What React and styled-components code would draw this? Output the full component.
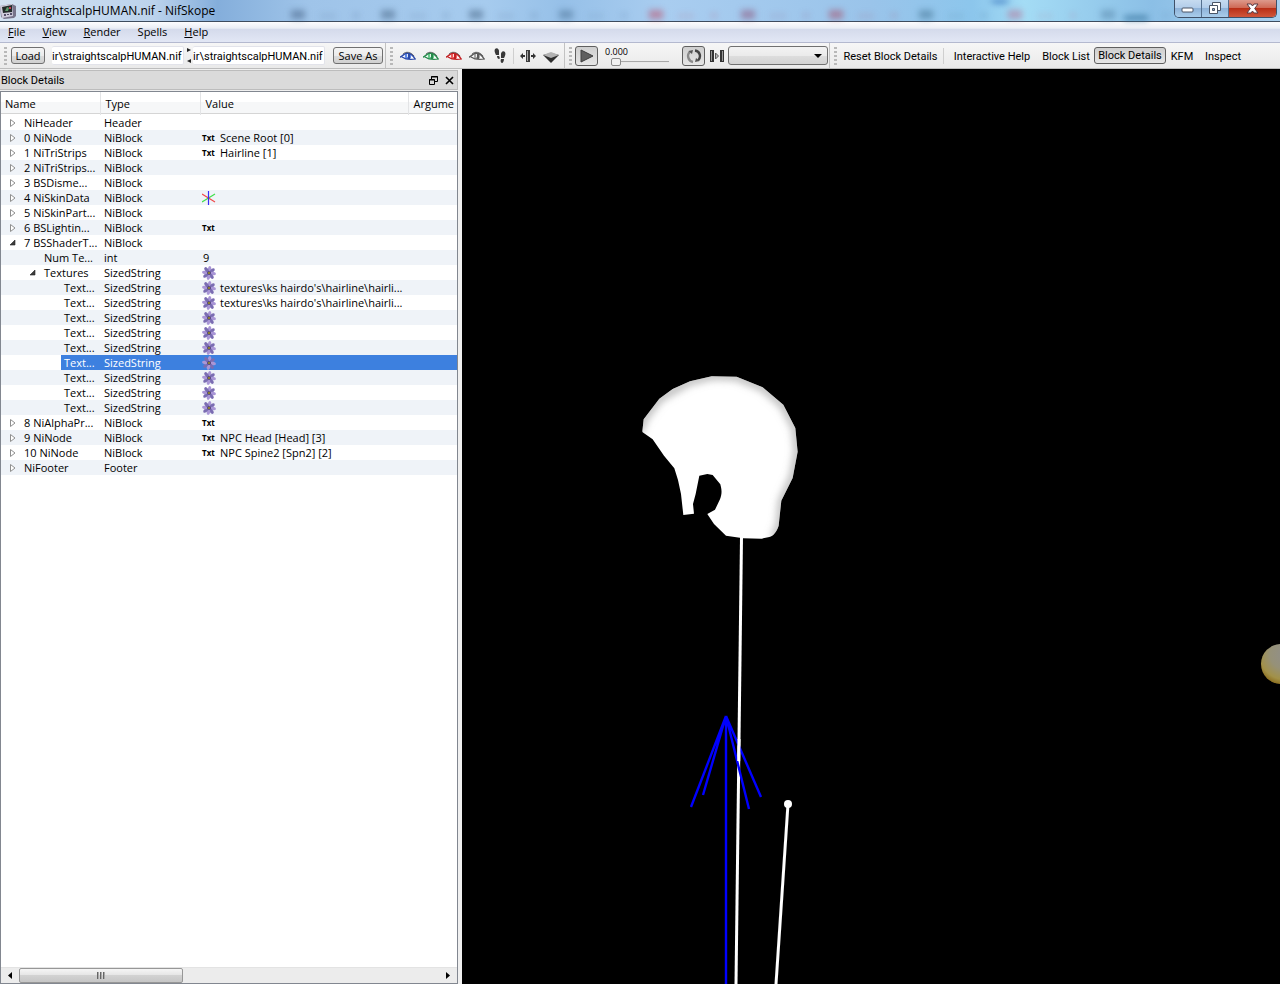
import React, { useState } from "react"
import styled, { createGlobalStyle, css } from "styled-components"

const rows = [
  { name: "NiHeader", type: "Header", open: false },
  { name: "0 NiNode", type: "NiBlock", open: false, icon: "txt", value: "Scene Root [0]" },
  { name: "1 NiTriStrips", type: "NiBlock", open: false, icon: "txt", value: "Hairline [1]" },
  { name: "2 NiTriStrips...", type: "NiBlock", open: false },
  { name: "3 BSDisme...", type: "NiBlock", open: false },
  { name: "4 NiSkinData", type: "NiBlock", open: false, icon: "axes" },
  { name: "5 NiSkinPart...", type: "NiBlock", open: false },
  { name: "6 BSLightin...", type: "NiBlock", open: false, icon: "txt" },
  { name: "7 BSShaderT...", type: "NiBlock", open: true },
  { name: "Num Te...", type: "int", level: 1, value: "9" },
  { name: "Textures", type: "SizedString", level: 1, open: true, icon: "flower" },
  { name: "Text...", type: "SizedString", level: 2, icon: "flower", value: "textures\\ks hairdo's\\hairline\\hairli..." },
  { name: "Text...", type: "SizedString", level: 2, icon: "flower", value: "textures\\ks hairdo's\\hairline\\hairli..." },
  { name: "Text...", type: "SizedString", level: 2, icon: "flower" },
  { name: "Text...", type: "SizedString", level: 2, icon: "flower" },
  { name: "Text...", type: "SizedString", level: 2, icon: "flower" },
  { name: "Text...", type: "SizedString", level: 2, icon: "flower", selected: true },
  { name: "Text...", type: "SizedString", level: 2, icon: "flower" },
  { name: "Text...", type: "SizedString", level: 2, icon: "flower" },
  { name: "Text...", type: "SizedString", level: 2, icon: "flower" },
  { name: "8 NiAlphaPr...", type: "NiBlock", open: false, icon: "txt" },
  { name: "9 NiNode", type: "NiBlock", open: false, icon: "txt", value: "NPC Head [Head] [3]" },
  { name: "10 NiNode", type: "NiBlock", open: false, icon: "txt", value: "NPC Spine2 [Spn2] [2]" },
  { name: "NiFooter", type: "Footer", open: false },
]

const menus = ["File", "View", "Render", "Spells", "Help"]

const smudges = [
  [300, "#3f5c80"],
  [390, "#41607f"],
  [478, "#41607f"],
  [568, "#4a6f94"],
  [658, "#c0455f"],
  [750, "#8a4a72"],
  [838, "#a84660"],
  [928, "#3f6f90"],
  [1017, "#b86a90"],
  [1110, "#5683a8"],
]

const AppIcon = () => (
  <svg width="16" height="16" viewBox="0 0 16 16">
    <path d="M0 3l12-2 4 2v10l-2 2-10 1-3-2z" fill="#77748a" />
    <path d="M0 3l12-2 1 12-11 2z" fill="#cfccdc" />
    <path d="M2 4l10-2v7l-9 1z" fill="#222b2a" />
    <path d="M5 8l2-4 2 1-1 3z" fill="#5f9a6c" />
    <path d="M9 4h2v2H9z" fill="#c33b4e" />
    <path d="M4 11h2v2H4zM7 11h2v1H7zM10 10h2v2h-2z" fill="#55506a" />
  </svg>
)

const Eye = ({ color, light }) => (
  <svg width="16" height="14" viewBox="0 0 16 14">
    <path d="M1 8C4 3 12 1 15 10c-4 1-10 2-14-2z" fill="#fff" />
    <circle cx="8" cy="7" r="3.200" fill={light} />
    <path d="M8 4h2v6H8z" fill={color} />
    <path d="M7 5h1v3H7z" fill="#fff" opacity="0.8" />
    <path d="M0 8c2 0 3-3 7-4 4 0 6 2 8 6" fill="none" stroke={color} strokeWidth="1.400" />
    <path d="M2 8c4 3 8 3 14 2" fill="none" stroke={color} strokeWidth="1.200" />
    <path d="M3 5c3-3 8-2 11 2" fill="none" stroke="#555" strokeWidth="0.800" />
  </svg>
)

const Feet = () => (
  <svg width="12" height="16" viewBox="0 0 12 16" fill="#383838">
    <path d="M1 1c2-2 4 0 4 2v4H2C1 5 0 3 1 1z" />
    <path d="M3 8h2c1 1 1 3 0 3s-2-1-2-3z" />
    <path d="M11 4c-2-2-4 0-4 2v4h3c1-2 2-4 1-6z" />
    <path d="M7 11h3c0 2-1 4-2 4s-2-2-1-4z" />
  </svg>
)

const Symmetry = () => (
  <svg width="16" height="14" viewBox="0 0 16 14">
    <path d="M6 1h4v12H6z" fill="#3c3c3c" />
    <path d="M7 2h1v10H7z" fill="#a8a8a8" />
    <path d="M0 7l3-3v2h2v2H3v2zM16 7l-3-3v2h-2v2h2v2z" fill="#333" />
  </svg>
)

const Wedge = () => (
  <svg width="16" height="14" viewBox="0 0 16 14">
    <path d="M0 6l8 8 8-8-8-2z" fill="#2e2e2e" />
    <path d="M0 6l8-3 8 3-8 3z" fill="#b2b2b2" />
  </svg>
)

const Play = () => (
  <svg width="16" height="14" viewBox="0 0 16 14">
    <path d="M2 1l12 6-12 6z" fill="#5e5e5e" stroke="#3e3e3e" />
  </svg>
)

const Loop = () => (
  <svg width="16" height="16" viewBox="0 0 16 16" fill="none" strokeWidth="2.400">
    <path d="M9 2.500C14 3 15.500 9 12 12.500" stroke="#444" />
    <path d="M7 14C2 13 0.500 7 4 3.500" stroke="#8a8a8a" />
    <path d="M2.500 3L7 2 6 6zM13.500 13L9 14l1-4z" fill="#555" stroke="none" />
  </svg>
)

const Step = () => (
  <svg width="14" height="12" viewBox="0 0 14 12">
    <path d="M0 0h4v12H0zM10 0h4v12h-4z" fill="#333" />
    <path d="M1 1h1v10H1zM12 1h1v10h-1z" fill="#999" />
    <path d="M5.500 3l3 3-3 3z" fill="#bbb" stroke="#555" />
  </svg>
)

const Flower = () => (
  <svg width="14" height="14" viewBox="0 0 14 14">
    {[0, 45, 90, 135, 180, 225, 270, 315].map((a) => (
      <ellipse
        key={a}
        cx="7"
        cy="3"
        rx="1.7"
        ry="3"
        fill={a % 90 ? "#7a6cb2" : "#a996d6"}
        transform={`rotate(${a + 8} 7 7)`}
      />
    ))}
    <circle cx="7" cy="7" r="1.800" fill="#3c2c58" />
    <circle cx="7" cy="7" r="1" fill="#a59a2c" />
  </svg>
)

const Axes = () => (
  <svg width="14" height="14" viewBox="0 0 14 14" strokeWidth="1.200">
    <path d="M0 11L13 3" stroke="#3fe04a" />
    <path d="M0 3l13 8" stroke="#f04a4a" />
    <path d="M6.500 0v14" stroke="#3a2cf5" />
  </svg>
)

const Arrow = ({ open }) => (
  <svg width="8" height="8" viewBox="0 0 8 8">
    {open ? (
      <path d="M7 1v5H2z" fill="#3c3c3c" stroke="#222" strokeWidth="0.6" />
    ) : (
      <path d="M2.500 0.500v7L7 4z" fill="#fff" stroke="#8f8f8f" />
    )}
  </svg>
)

const CellIcon = ({ kind }) => {
  if (kind === "txt") return <TxtIcon>Txt</TxtIcon>
  if (kind === "axes") return <IconBox><Axes /></IconBox>
  if (kind === "flower") return <IconBox><Flower /></IconBox>
  return null
}

// long paths stay scrolled to the file name
const showEnd = (el) => {
  if (el) el.scrollLeft = el.scrollWidth
}

const headPath =
  "M67 214L71 178 118 116 158 87 210 64 275 49 350 50 428 82 490 134 526 204 533 275 518 354 484 422 476 497C470 515 460 528 448 531L425 536 370 535 318 527 282 492 262 462 285 449 300 418C307 400 305 388 301 373L278 345 262 342 238 347 227 402 219 432 222 461 190 465 183 402 174 360 163 325 132 287 98 238 68 217Z"

const Scene = () => (
  <SceneSvg viewBox="0 0 818 915" preserveAspectRatio="xMidYMid slice" role="img" aria-label="Model view">
    <defs>
      <filter id="soft" x="-10%" y="-10%" width="120%" height="120%">
        <feGaussianBlur stdDeviation="12" />
      </filter>
      <clipPath id="headClip">
        <path d={headPath} />
      </clipPath>
      <radialGradient id="ball" cx="60%" cy="25%" r="75%">
        <stop offset="0" stopColor="#918f8a" />
        <stop offset="0.5" stopColor="#969178" />
        <stop offset="0.85" stopColor="#a29148" />
        <stop offset="1" stopColor="#8f7426" />
      </radialGradient>
    </defs>
    <path d="M279.500 468L274 915" stroke="#fff" strokeWidth="3" />
    <path d="M326 735L314 915" stroke="#fff" strokeWidth="3" />
    <circle cx="326" cy="735" r="4" fill="#fff" />
    <path
      d="M264 647V915M264 647L229 738M264 647L241 726M264 647L287 740M264 647L299 728"
      stroke="#00f"
      strokeWidth="2.400"
      fill="none"
    />
    <path d="M277 670L276.700 692" stroke="#fff" strokeWidth="3" />
    <g transform="translate(158 291) scale(0.3333)">
      <path d={headPath} fill="#fff" />
      <g clipPath="url(#headClip)">
        <path
          d="M60 215L70 178 118 115 207 65 276 47 351 50 428 82 490 135 527 205 534 275 520 350 486 425 480 495 462 535"
          fill="none"
          stroke="#9a9a9a"
          strokeWidth="16"
          filter="url(#soft)"
        />
      </g>
    </g>
    <circle cx="819" cy="595" r="20" fill="url(#ball)" />
  </SceneSvg>
)

export default function App() {
  const [time, setTime] = useState(0)

  return (
    <Window>
      <GlobalStyle />
      <TitleBar>
        <Smudges aria-hidden="true">
          {smudges.map(([x, color]) => (
            <g key={x} fill={color}>
              <rect x={x - 9} y="10" width="14" height="9" opacity="0.5" />
              <rect x={x + 20} y="14" width="16" height="4" opacity="0.15" />
              <rect x={x + 53} y="13" width="6" height="5" opacity="0.2" />
            </g>
          ))}
          <ellipse cx="1000" cy="0" rx="10" ry="3" fill="#2461b4" />
          <rect x="1124" y="16" width="24" height="4" fill="#2d6c96" opacity="0.8" />
        </Smudges>
        <AppIcon />
        <Title>straightscalpHUMAN.nif - NifSkope</Title>
        <Caption>
          <CaptionButton aria-label="Minimize">
            <svg width="14" height="8" viewBox="0 0 14 8">
              <rect x="1" y="3" width="11" height="4" rx="1" fill="#fff" stroke="#4a5566" />
            </svg>
          </CaptionButton>
          <CaptionButton aria-label="Restore">
            <svg width="13" height="13" viewBox="0 0 13 13" fill="#fff" stroke="#4a5566">
              <path d="M3.500 0.500h8v8h-8z" />
              <path d="M0.500 3.500h8v8h-8z" />
              <path d="M3.500 6.500h2v2h-2z" fill="#8db1d8" />
            </svg>
          </CaptionButton>
          <CaptionButton aria-label="Close" $close>
            <svg width="13" height="12" viewBox="0 0 13 12">
              <path
                d="M1 1h4l1.500 2L8 1h4L8.700 5.500 12 10H8L6.500 8 5 10H1l3.300-4.500z"
                fill="#fff"
                stroke="#583b44"
              />
            </svg>
          </CaptionButton>
        </Caption>
      </TitleBar>

      <MenuBar>
        {menus.map((m) => (
          <MenuItem key={m}>{m === "Spells" ? m : <><u>{m[0]}</u>{m.slice(1)}</>}</MenuItem>
        ))}
      </MenuBar>

      <ToolBars>
        <Group $width="386px">
          <Grip />
          <PushButton $width="34px" $wide>Load</PushButton>
          <PathInput ref={showEnd} aria-label="File to load" defaultValue="hair\straightscalpHUMAN.nif" />
          <Swap>
            <svg width="5" height="16" viewBox="0 0 5 16" fill="#222">
              <path d="M1 0l4 2-4 2zM5 11l-4 2 4 2z" />
            </svg>
          </Swap>
          <PathInput ref={showEnd} aria-label="File to save" defaultValue="hair\straightscalpHUMAN.nif" />
          <PushButton $width="50px" $wide>Save As</PushButton>
        </Group>

        <Group $width="179px">
          <Grip />
          <Tool aria-label="View top"><Eye color="#2b48a8" light="#5b86e6" /></Tool>
          <Tool aria-label="View front"><Eye color="#278a4c" light="#66c98a" /></Tool>
          <Tool aria-label="View side"><Eye color="#c21f22" light="#ee5a5a" /></Tool>
          <Tool aria-label="View user"><Eye color="#5a5a5a" light="#a5a5a5" /></Tool>
          <Tool aria-label="View walk"><Feet /></Tool>
          <Separator />
          <Tool aria-label="View flip"><Symmetry /></Tool>
          <Tool aria-label="Perspective"><Wedge /></Tool>
        </Group>

        <Group $width="265px">
          <Grip />
          <Tool aria-label="Play" $pressed><Play /></Tool>
          <TimeLabel>
            <span>{time.toFixed(3)}</span>
            <Slider type="range" min="0" max="1" step="0.001" value={time} onChange={(e) => setTime(Number(e.target.value))} />
          </TimeLabel>
          <Tool aria-label="Loop" $pressed><Loop /></Tool>
          <Tool aria-label="Switch animation"><Step /></Tool>
          <SelectBox>
            <AnimSelect aria-label="Animation" defaultValue="">
              <option value=""></option>
            </AnimSelect>
            <svg width="8" height="4" viewBox="0 0 8 4"><path d="M0 0h8L4 4z" /></svg>
          </SelectBox>
        </Group>

        <Group $grow>
          <Grip />
          <TextTool $width="101px">Reset Block Details</TextTool>
          <Separator />
          <TextTool $width="92px">Interactive Help</TextTool>
          <TextTool $width="56px">Block List</TextTool>
          <PushButton $width="72px" $pressed>Block Details</PushButton>
          <TextTool $width="32px">KFM</TextTool>
          <TextTool $width="50px">Inspect</TextTool>
        </Group>
      </ToolBars>

      <Main>
        <Dock>
          <DockTitle>
            <h2>Block Details</h2>
            <DockButton aria-label="Float">
              <svg width="9" height="9" viewBox="0 0 9 9" fill="none" stroke="#000">
                <path d="M2.500 3V0.500h6v5H6M2 1h7M0 4h6M0.500 3.500h5v5h-5z" />
              </svg>
            </DockButton>
            <DockButton aria-label="Close panel">
              <svg width="9" height="9" viewBox="0 0 9 9" stroke="#000" strokeWidth="1.6">
                <path d="M1 1l7 7M8 1L1 8" />
              </svg>
            </DockButton>
          </DockTitle>
          <TreeFrame>
            <TreeArea>
              <Tree>
                <colgroup>
                  <col width="99" />
                  <col width="100" />
                  <col width="208" />
                  <col />
                </colgroup>
                <thead>
                  <tr>
                    <Th>Name</Th>
                    <Th>Type</Th>
                    <Th>Value</Th>
                    <Th>Argume</Th>
                  </tr>
                </thead>
                <tbody>
                  {rows.map((row, i) => (
                    <Row key={i} $selected={row.selected}>
                      <NameCell>
                        <NameLine>
                          <Branch $level={row.level || 0}>
                            {row.open !== undefined && (
                              <Expander aria-label={`Toggle ${row.name}`} aria-expanded={row.open}>
                                <Arrow open={row.open} />
                              </Expander>
                            )}
                          </Branch>
                          <NameText $selected={row.selected}>{row.name}</NameText>
                        </NameLine>
                      </NameCell>
                      <Cell>{row.type}</Cell>
                      <ValueCell>
                        <ValueLine $plain={!row.icon}>
                          <CellIcon kind={row.icon} />
                          {row.value}
                        </ValueLine>
                      </ValueCell>
                      <Cell />
                    </Row>
                  ))}
                </tbody>
              </Tree>
            </TreeArea>
            <ScrollBar>
              <ScrollButton aria-label="Scroll left">
                <svg width="4" height="7" viewBox="0 0 4 7"><path d="M4 0v7L0 3.500z" /></svg>
              </ScrollButton>
              <ScrollTrack>
                <Thumb>
                  <i />
                  <i />
                  <i />
                </Thumb>
              </ScrollTrack>
              <ScrollButton aria-label="Scroll right">
                <svg width="4" height="7" viewBox="0 0 4 7"><path d="M0 0v7l4-3.500z" /></svg>
              </ScrollButton>
            </ScrollBar>
          </TreeFrame>
        </Dock>
        <Viewport>
          <Scene />
        </Viewport>
      </Main>
    </Window>
  )
}

const GlobalStyle = createGlobalStyle`
  * {
    box-sizing: border-box;
  }

  body {
    margin: 0;
    font-family: "Open Sans", "Noto Sans", sans-serif;
    font-size: 11px;
    color: #000;
  }

  button, input, select {
    font: inherit;
    color: inherit;
    margin: 0;
    padding: 0;
    border: none;
    background: none;
  }

  svg {
    display: block;
    flex: none;
  }
`

const Window = styled.div`
  height: 100vh;
  display: flex;
  flex-direction: column;
  background: #f0f0f0;
  overflow: hidden;
`

const TitleBar = styled.header`
  position: relative;
  flex: none;
  height: 22px;
  display: flex;
  align-items: center;
  border-bottom: 1px solid #3e4c5e;
  background: linear-gradient(90deg, #d3e2f2 0%, #bcd3ec 12%, #84aedb 17%, #9fc4e9 24%, #a6cbee 38%, #96c0e8 44%, #a9cdf0 52%, #9ac4ea 68%, #8cc6ec 76%, #a4dcf5 80%, #8bbfe6 90%, #a9d0ef 100%);
`

const Smudges = styled.svg`
  position: absolute;
  inset: 0;
  width: 100%;
  height: 100%;
  filter: blur(3px);
`

const Title = styled.h1`
  position: relative;
  margin: 0;
  padding-left: 5px;
  flex: 1;
  font-size: 12px;
  font-weight: 400;
`

const Caption = styled.div`
  position: relative;
  align-self: flex-start;
  height: 18px;
  margin-right: 3px;
  display: flex;
  border: 1px solid #3f5068;
  border-top: none;
  border-radius: 0 0 5px 5px;
  overflow: hidden;
`

const CaptionButton = styled.button`
  width: ${(props) => (props.$close ? "47px" : "27px")};
  display: flex;
  align-items: center;
  justify-content: center;
  border-right: ${(props) => (props.$close ? "none" : "1px solid #55708f")};
  background: ${(props) =>
    props.$close
      ? "linear-gradient(#dd9a8c 0%, #cf6a56 45%, #b92f17 50%, #d0563a 100%)"
      : "linear-gradient(#c6dbf0 0%, #b2cdea 45%, #8fb3d9 50%, #a9cdeb 100%)"};
`

const MenuBar = styled.nav`
  flex: none;
  height: 21px;
  padding: 0 8px;
  display: flex;
  align-items: center;
  gap: 17px;
  border-bottom: 1px solid #b4b9cf;
  background: linear-gradient(#fdfdfe 0%, #e9edf5 32%, #d4daeb 34%, #e2e7f5 100%);
`

const MenuItem = styled.button`
  font-size: 11px;
  line-height: 16px;
`

const ToolBars = styled.div`
  flex: none;
  height: 26px;
  display: flex;
  border-bottom: 1px solid #bdbdbd;
  background: linear-gradient(#f6f6f6, #eaeaea);
  font-family: Roboto, "Open Sans", sans-serif;
`

const Group = styled.div`
  flex: ${(props) => (props.$grow ? "1 1 0" : `0 0 ${props.$width}`)};
  min-width: 0;
  display: flex;
  align-items: center;
  border-right: ${(props) => (props.$grow ? "none" : "1px solid #c2c2c2")};
`

const Grip = styled.span`
  flex: none;
  width: 3px;
  height: 18px;
  margin: 0 3px 0 4px;
  background: repeating-linear-gradient(#b9b9b9 0 2px, transparent 2px 4px);
`

const pressed = css`
  border: 1px solid #5f5f5f;
  background: linear-gradient(#cfcfcf, #e6e6e6);
`

const PushButton = styled.button`
  flex: none;
  width: ${(props) => props.$width};
  height: 17px;
  border: 1px solid #707070;
  border-radius: 3px;
  background: linear-gradient(#f4f4f4 0%, #ebebeb 50%, #dcdcdc 51%, #d0d0d0 100%);
  font-family: ${(props) => (props.$wide ? '"Open Sans", "Noto Sans", sans-serif' : "inherit")};
  line-height: 14px;
  white-space: nowrap;
  ${(props) => props.$pressed && pressed}

  ${Grip} + & {
    margin-left: 1px;
  }
`

const PathInput = styled.input`
  flex: 1;
  min-width: 0;
  height: 19px;
  border: 1px solid #e2e3ea;
  border-left: none;
  border-radius: 2px;
  padding: 2px 1px 0 0;
  background: #fff;

  ${PushButton} + & {
    margin-left: 7px;
  }

  & + ${PushButton} {
    margin: 0 2px 0 8px;
  }
`

const Swap = styled.span`
  width: 9px;
  display: flex;
  justify-content: center;
`

const Tool = styled.button`
  flex: none;
  width: 23px;
  height: 20px;
  display: flex;
  align-items: center;
  justify-content: center;
  border-radius: 3px;
  ${(props) => props.$pressed && pressed}
`

const Separator = styled.span`
  flex: none;
  width: 1px;
  height: 16px;
  margin: 0 2px;
  background: #cfcfcf;
`

const TimeLabel = styled.label`
  width: 84px;
  height: 22px;
  padding: 0 13px 0 7px;
  display: flex;
  flex-direction: column;

  & span {
    font-family: "Open Sans", "Noto Sans", sans-serif;
    font-size: 9px;
    line-height: 13px;
  }
`

const Slider = styled.input`
  appearance: none;
  width: 58px;
  height: 9px;
  margin-left: 6px;
  background: linear-gradient(transparent 3px, #a9a9a9 3px 4px, #e9e9e9 4px 5px, transparent 5px);

  &::-webkit-slider-thumb {
    appearance: none;
    width: 10px;
    height: 8px;
    border: 1px solid #8b8b8b;
    border-radius: 2px;
    background: #f2f2f2;
  }
`

const SelectBox = styled.span`
  flex: 1;
  height: 19px;
  margin-right: 1px;
  padding-right: 5px;
  display: flex;
  align-items: center;
  border: 1px solid #707070;
  border-radius: 3px;
  background: linear-gradient(#f3f3f3 0%, #ebebeb 50%, #dedede 51%, #d2d2d2 100%);
`

const AnimSelect = styled.select`
  appearance: none;
  flex: 1;
  height: 17px;
`

const TextTool = styled.button`
  flex: none;
  width: ${(props) => props.$width};
  padding-top: 2px;
  line-height: 16px;
  white-space: nowrap;
`

const Main = styled.main`
  flex: 1;
  min-height: 0;
  display: grid;
  grid-template-columns: minmax(0, 458px) minmax(0, 1fr);
  gap: 4px;
`

const Dock = styled.section`
  display: flex;
  flex-direction: column;
  min-height: 0;
`

const DockTitle = styled.div`
  flex: none;
  height: 20px;
  margin: 1px 0;
  padding-right: 1px;
  display: flex;
  align-items: center;
  gap: 2px;
  border: 1px solid #bcbcbc;
  border-left: none;
  background: #dadada;

  & h2 {
    flex: 1;
    margin: 0;
    padding-left: 1px;
    font-family: Roboto, "Open Sans", sans-serif;
    font-size: 11px;
    font-weight: 400;
  }
`

const DockButton = styled.button`
  width: 14px;
  height: 14px;
  display: flex;
  align-items: center;
  justify-content: center;
`

const TreeFrame = styled.div`
  flex: 1;
  min-height: 0;
  display: flex;
  flex-direction: column;
  border: 1px solid #828790;
  background: #fff;
`

const TreeArea = styled.div`
  flex: 1;
  min-height: 0;
  overflow: hidden;
`

const Tree = styled.table`
  width: 100%;
  table-layout: fixed;
  border-collapse: collapse;
`

const Th = styled.th`
  height: 23px;
  padding: 0 0 0 5px;
  overflow: hidden;
  font-weight: 400;
  text-align: left;
  white-space: nowrap;
  border-right: 1px solid #e3e4e6;
  background: linear-gradient(#fff 0 10px, #f6f7f8 10px 21px, #d5d5d5 21px 22px, #fff 22px);

  &:first-child {
    padding-left: 4px;
  }

  &:last-child {
    border-right: none;
  }
`

const Row = styled.tr`
  &:nth-child(even) {
    background: #eff3f8;
  }

  ${(props) =>
    props.$selected &&
    css`
      color: #fff;

      & td + td {
        background: #3d80df;
      }
    `}
`

const Cell = styled.td`
  height: 15px;
  padding: 0 0 0 4px;
  line-height: 15px;
  overflow: hidden;
  white-space: nowrap;
`

const NameCell = styled(Cell)`
  padding: 0;
`

const NameLine = styled.div`
  display: flex;
  height: 15px;
`

const Branch = styled.span`
  flex: none;
  width: ${(props) => props.$level * 20 + 20}px;
  padding-left: ${(props) => props.$level * 20 + 7}px;
  display: flex;
  align-items: center;
`

const Expander = styled.button`
  width: 8px;
  height: 8px;
`

const NameText = styled.span`
  flex: 1;
  padding-left: 3px;
  background: ${(props) => (props.$selected ? "#3d80df" : "none")};
`

const ValueCell = styled(Cell)`
  padding-left: 0;
`

const ValueLine = styled.div`
  height: 15px;
  padding-left: ${(props) => (props.$plain ? "3px" : "2px")};
  display: flex;
  align-items: center;
`

const IconBox = styled.span`
  width: 18px;
`

const TxtIcon = styled.span`
  width: 18px;
  font-size: 8px;
  font-weight: 700;
`

const ScrollBar = styled.div`
  flex: none;
  height: 16px;
  display: flex;
  border-top: 1px solid #e3e3e3;
  background: #ececec;
`

const ScrollButton = styled.button`
  width: 18px;
  display: flex;
  align-items: center;
  justify-content: center;
`

const ScrollTrack = styled.div`
  flex: 1;
`

const Thumb = styled.div`
  width: 39%;
  height: 15px;
  display: flex;
  align-items: center;
  justify-content: center;
  gap: 1px;
  border: 1px solid #979797;
  border-radius: 2px;
  background: linear-gradient(#f5f5f5 0%, #e6e6e6 45%, #d2d2d2 50%, #c6c6c6 100%);

  & i {
    width: 2px;
    height: 7px;
    border-left: 1px solid #666;
    border-right: 1px solid #aaa;
  }
`

const Viewport = styled.section`
  min-height: 0;
  background: #000;
  overflow: hidden;
`

const SceneSvg = styled.svg`
  width: 100%;
  height: 100%;
`
